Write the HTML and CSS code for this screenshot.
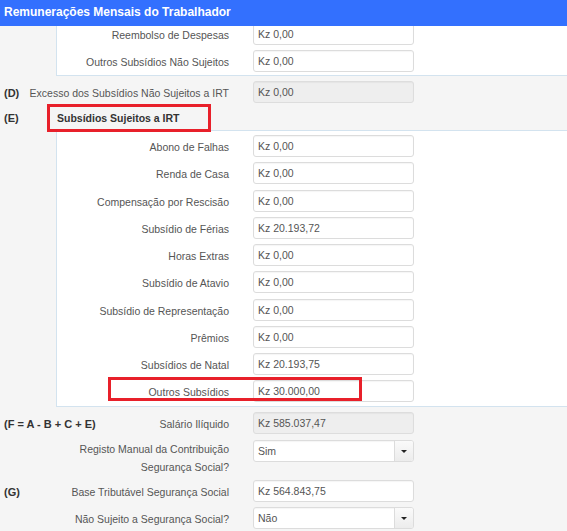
FILE: index.html
```html
<!DOCTYPE html>
<html lang="pt">
<head>
<meta charset="utf-8">
<title>Remunerações Mensais do Trabalhador</title>
<link rel="stylesheet" href="styles.css">
</head>
<body>
<div class="header">Remunerações Mensais do Trabalhador</div>
<main class="content">
  <section class="panel panel-top">
    <div class="row"><span class="lbl">Reembolso de Despesas</span><div class="field">Kz 0,00</div></div>
    <div class="row"><span class="lbl">Outros Subsídios Não Sujeitos</span><div class="field">Kz 0,00</div></div>
  </section>

  <div class="row main row-d"><span class="prefix">(D)</span><span class="lbl">Excesso dos Subsídios Não Sujeitos a IRT</span><div class="field ro">Kz 0,00</div></div>

  <div class="row main row-e"><span class="prefix">(E)</span><span class="section-title">Subsídios Sujeitos a IRT</span><span class="mark mark-e"></span></div>

  <section class="panel panel-e">
    <div class="row"><span class="lbl">Abono de Falhas</span><div class="field">Kz 0,00</div></div>
    <div class="row"><span class="lbl">Renda de Casa</span><div class="field">Kz 0,00</div></div>
    <div class="row"><span class="lbl">Compensação por Rescisão</span><div class="field">Kz 0,00</div></div>
    <div class="row"><span class="lbl">Subsídio de Férias</span><div class="field">Kz 20.193,72</div></div>
    <div class="row"><span class="lbl">Horas Extras</span><div class="field">Kz 0,00</div></div>
    <div class="row"><span class="lbl">Subsídio de Atavio</span><div class="field">Kz 0,00</div></div>
    <div class="row"><span class="lbl">Subsídio de Representação</span><div class="field">Kz 0,00</div></div>
    <div class="row"><span class="lbl">Prêmios</span><div class="field">Kz 0,00</div></div>
    <div class="row"><span class="lbl">Subsídios de Natal</span><div class="field">Kz 20.193,75</div></div>
    <div class="row"><span class="lbl">Outros Subsídios</span><div class="field">Kz 30.000,00</div><span class="mark mark-outros"></span></div>
  </section>

  <div class="row main row-f"><span class="prefix">(F = A - B + C + E)</span><span class="lbl">Salário Ilíquido</span><div class="field ro">Kz 585.037,47</div></div>

  <div class="row main row-reg"><span class="prefix"></span><span class="lbl lbl-multi">Registo Manual da Contribuição<br>Segurança Social?</span><div class="field select"><span class="sel-text">Sim</span><span class="sel-btn"><span class="caret"></span></span></div></div>

  <div class="row main row-g"><span class="prefix">(G)</span><span class="lbl">Base Tributável Segurança Social</span><div class="field">Kz 564.843,75</div></div>

  <div class="row main row-nao"><span class="prefix"></span><span class="lbl">Não Sujeito a Segurança Social?</span><div class="field select"><span class="sel-text">Não</span><span class="sel-btn"><span class="caret"></span></span></div></div>
</main>
</body>
</html>
```

FILE: styles.css
```css
html, body {
  margin: 0;
  padding: 0;
}
body {
  background: #f5f5f5;
  font-family: "Liberation Sans", Arial, sans-serif;
  font-size: 10.5px;
  color: #555;
  overflow: hidden;
  width: 567px;
  height: 531px;
}
.header {
  position: fixed;
  top: 0;
  left: 0;
  right: 0;
  height: 26px;
  line-height: 24px;
  background: #3370fe;
  color: #fff;
  font-weight: bold;
  font-size: 12px;
  padding-left: 4px;
  z-index: 10;
}
.content {
  padding-top: 17px;
  display: flex;
  flex-direction: column;
}
.panel {
  margin-left: 56px;
  margin-right: -10px;
  background: #fff;
  border: 1px solid #d3e3ef;
  display: flex;
  flex-direction: column;
}
.panel-top {
  padding: 5px 0 3px;
  gap: 5px;
}
.panel-e {
  margin-top: 2px;
  padding: 4px 0 4px;
  gap: 5.25px;
}
.row {
  display: flex;
  align-items: flex-start;
  position: relative;
  height: 22px;
}
.lbl {
  box-sizing: border-box;
  flex: none;
  width: 172px;
  margin-right: 24px;
  display: flex;
  justify-content: flex-end;
  text-align: right;
  height: 22px;
  line-height: 20px;
  padding-top: 2px;
  white-space: nowrap;
}
.main .lbl {
  width: 173px;
}
.prefix {
  box-sizing: border-box;
  flex: none;
  width: 56px;
  padding-left: 4px;
  padding-top: 2px;
  font-size: 11px;
  font-weight: bold;
  color: #333;
  line-height: 20px;
  white-space: nowrap;
}
.row-reg {
  height: 36px;
}
.lbl-multi {
  height: 36px;
  line-height: 18px;
  padding-top: 0;
}
.field {
  box-sizing: border-box;
  flex: none;
  width: 161px;
  height: 22px;
  line-height: 19px;
  padding-top: 1px;
  padding-left: 4px;
  border: 1px solid #dcdcdc;
  border-radius: 3px;
  background: #fff;
  color: #555;
  box-shadow: inset 0 1px 1px rgba(0,0,0,0.04);
  white-space: nowrap;
}
.field.ro {
  background: #eeeeee;
  border-color: #dddddd;
}
.row-d { margin-top: 5px; }
.row-e {
  margin-top: 3px;
  z-index: 2;
}
.row-e .prefix { width: 57px; }
.section-title {
  font-weight: bold;
  color: #333;
  line-height: 20px;
  padding-top: 2px;
}
.row-f { margin-top: 5px; }
.row-reg { margin-top: 6px; }
.row-g { margin-top: 4px; }
.row-nao { margin-top: 5px; }
.select {
  display: flex;
  padding-left: 0;
  padding-top: 0;
  overflow: hidden;
}
.sel-text {
  flex: 1;
  padding-left: 4px;
  padding-top: 1px;
}
.sel-btn {
  width: 18px;
  height: 20px;
  border-left: 1px solid #dcdcdc;
  background: linear-gradient(#fafafa, #ececec);
  display: flex;
  align-items: center;
  justify-content: center;
}
.caret {
  width: 0;
  height: 0;
  border-left: 3px solid transparent;
  border-right: 3px solid transparent;
  border-top: 3px solid #222;
  margin-top: 1px;
}
.mark {
  position: absolute;
  box-sizing: border-box;
  border: 3px solid #e8202a;
  pointer-events: none;
  z-index: 3;
}
.mark-e {
  left: 47px;
  top: -2px;
  width: 164px;
  height: 28px;
}
.mark-outros {
  left: 51px;
  top: -3px;
  width: 254px;
  height: 24px;
}
```
